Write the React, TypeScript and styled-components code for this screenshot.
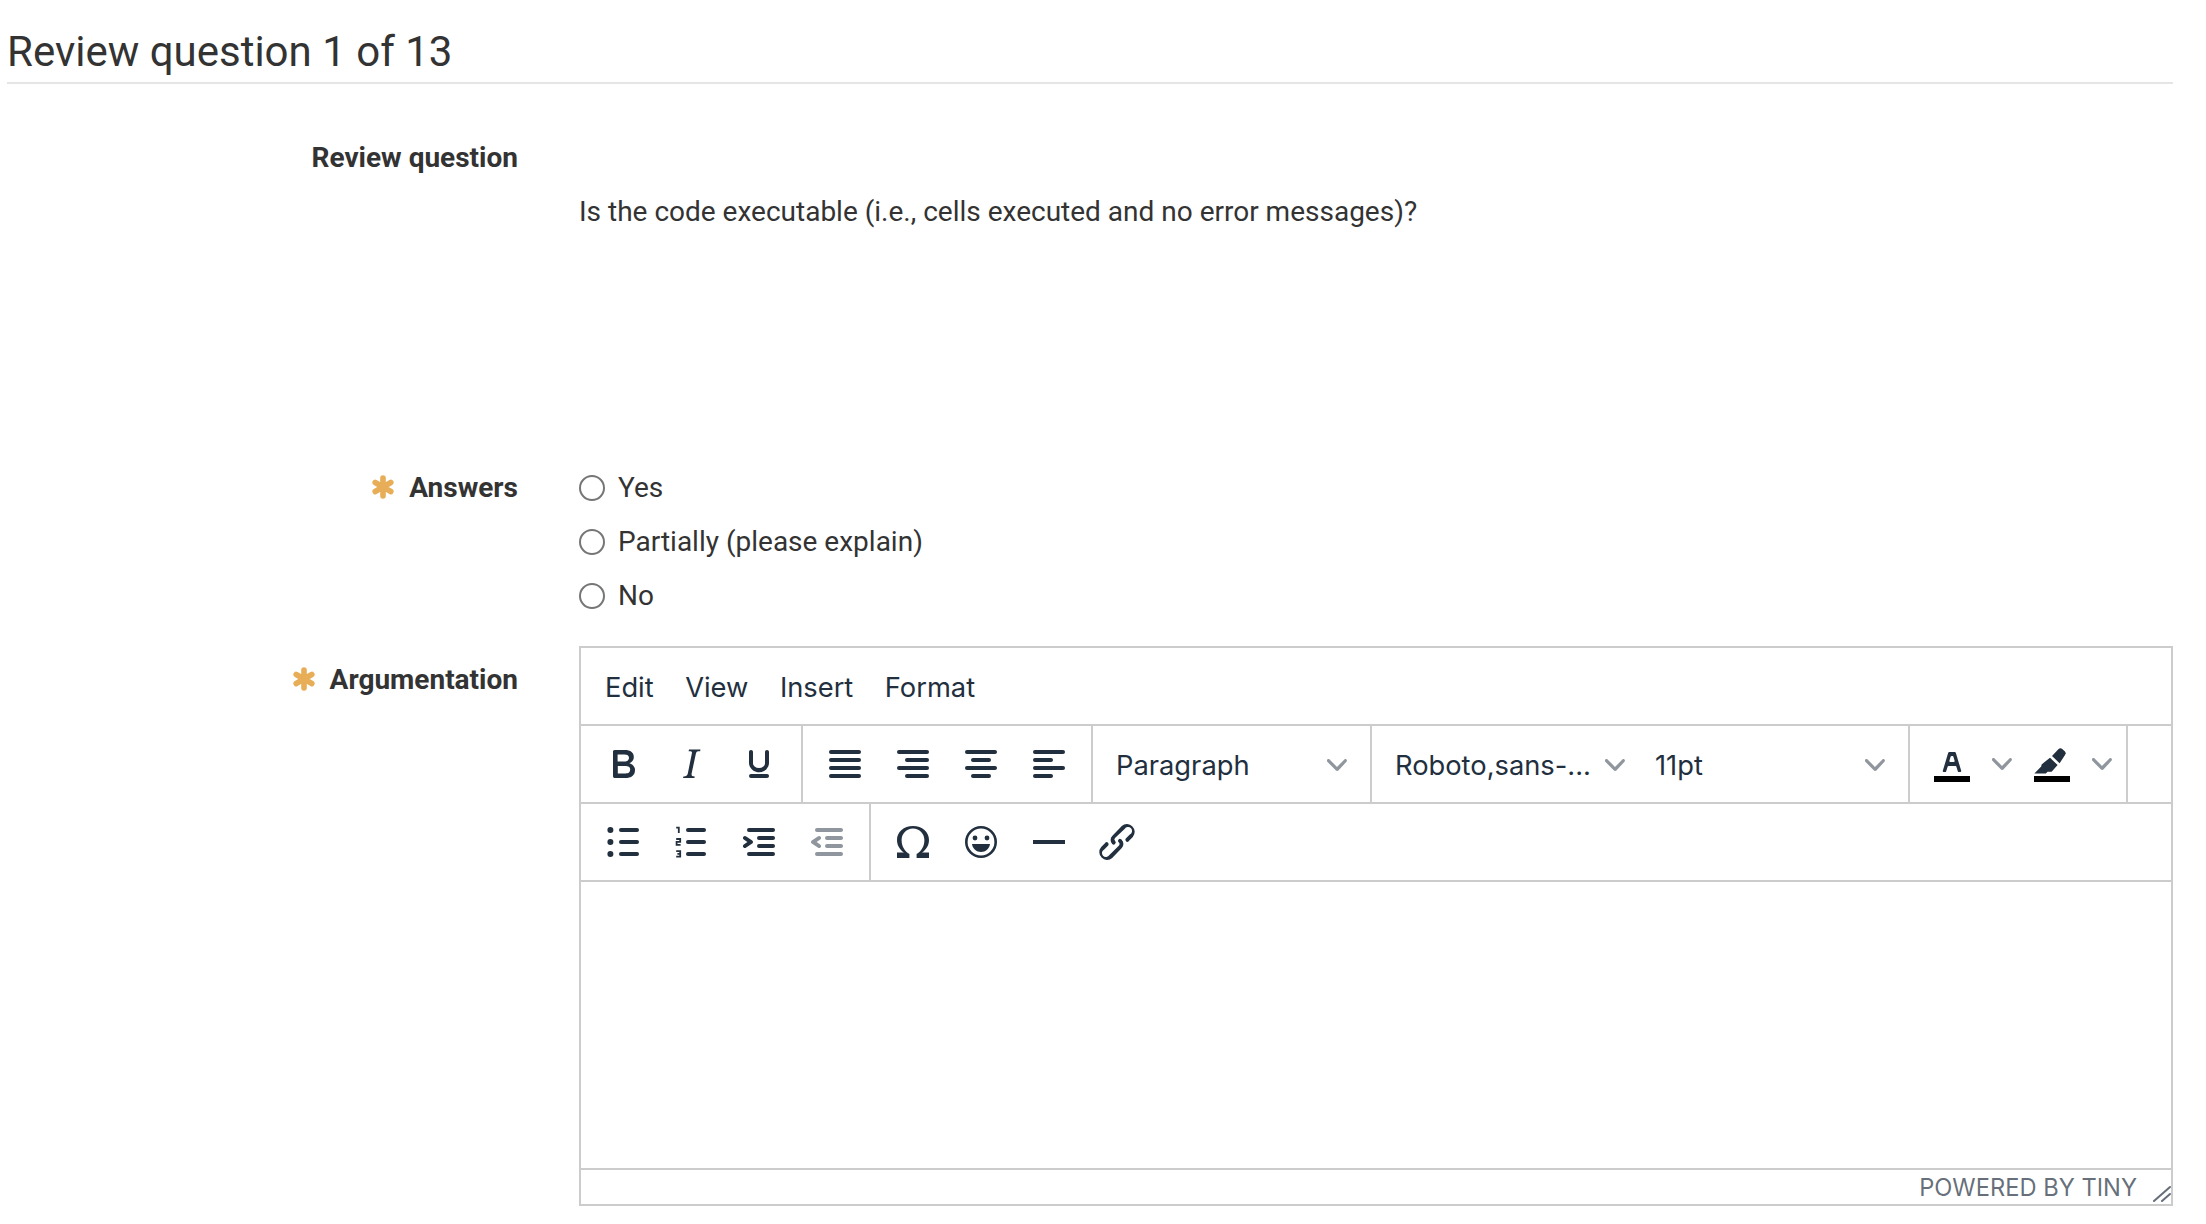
import { ReactNode } from 'react'
import styled, { createGlobalStyle } from 'styled-components'

const GlobalStyle = createGlobalStyle`
  html, body {
    margin: 0;
    padding: 0;
    background: #fff;
  }
  body {
    font-family: Roboto, "Liberation Sans", sans-serif;
    color: #333;
  }
`

const Page = styled.div`
  padding: 0 33px 0 7px;
`

const Heading = styled.h2`
  margin: 0;
  height: 82px;
  border-bottom: 2px solid #e5e5e5;
  font-size: 42px;
  font-weight: 400;
  line-height: 104px;
  color: #333;
`

const FormRow = styled.div<{ $top?: number }>`
  display: grid;
  grid-template-columns: 511px 1fr;
  column-gap: 61px;
  margin-top: ${(p) => p.$top ?? 0}px;
`

const Label = styled.div<{ $top?: number }>`
  display: flex;
  justify-content: flex-end;
  align-items: center;
  gap: 14px;
  height: 40px;
  margin-top: ${(p) => p.$top ?? 0}px;
  font-size: 28px;
  font-weight: 700;
  color: #333;
`

const Star = styled.svg`
  width: 24px;
  height: 24px;
  stroke: #e8ad57;
  stroke-width: 5.6;
  stroke-linecap: round;
  fill: none;
`

const Question = styled.div`
  height: 275px;
  padding-top: 55px;
  font-size: 28px;
  line-height: 40px;
  color: #333;
`

const RadioList = styled.div`
  display: flex;
  flex-direction: column;
  gap: 14px;
`

const RadioRow = styled.label`
  display: flex;
  align-items: center;
  gap: 13px;
  height: 40px;
  font-size: 28px;
  color: #333;
`

const RadioDot = styled.span`
  width: 26px;
  height: 26px;
  margin-top: 2px;
  box-sizing: border-box;
  border: 2px solid #767676;
  border-radius: 50%;
  background: #fff;
`

const Editor = styled.div`
  display: flex;
  flex-direction: column;
  height: 560px;
  box-sizing: border-box;
  border: 2px solid #ccc;
  font-family: Inter, "Noto Sans", sans-serif;
  color: #222f3e;
`

const MenuBar = styled.div`
  display: flex;
  align-items: center;
  gap: 31.5px;
  height: 78px;
  padding: 2px 24px 0;
  box-sizing: border-box;
  border-bottom: 2px solid #ccc;
  font-size: 27.3px;
`

const ToolRow = styled.div`
  display: flex;
  height: 76px;
  border-bottom: 2px solid #ccc;
`

const ToolGroup = styled.div<{ $last?: boolean }>`
  display: flex;
  align-items: center;
  padding: 0 8px;
  border-right: ${(p) => (p.$last ? 'none' : '2px solid #ccc')};
`

const ToolButton = styled.span<{ $off?: boolean }>`
  display: flex;
  align-items: center;
  justify-content: center;
  width: 68px;
  height: 68px;
  svg {
    width: 48px;
    height: 48px;
    fill: #222f3e;
    opacity: ${(p) => (p.$off ? 0.5 : 1)};
  }
`

const SelectBox = styled.span<{ $w: number }>`
  display: flex;
  align-items: center;
  justify-content: space-between;
  box-sizing: border-box;
  width: ${(p) => p.$w}px;
  height: 68px;
  padding: 2px 15px 0 15px;
  font-size: 27.3px;
  white-space: nowrap;
`

const ChevronWrap = styled.span<{ $w?: number }>`
  display: flex;
  align-items: center;
  justify-content: center;
  flex: none;
  width: ${(p) => (p.$w ? `${p.$w}px` : 'auto')};
  svg {
    display: block;
    width: 20px;
    height: 20px;
    fill: #222f3e;
    opacity: 0.5;
  }
`

const EditArea = styled.div`
  flex: 1;
  border-bottom: 2px solid #ccc;
`

const StatusBar = styled.div`
  display: flex;
  align-items: center;
  justify-content: flex-end;
  height: 34px;
  font-size: 23.7px;
  color: rgba(34, 47, 62, 0.7);
`

const ResizeHandle = styled.svg`
  align-self: flex-end;
  width: 20px;
  height: 20px;
  margin-left: 14px;
  stroke: rgba(34, 47, 62, 0.7);
  stroke-width: 2;
  stroke-linecap: round;
  fill: none;
`

const Chevron = () => (
  <svg viewBox="0 0 10 10">
    <path d="M8.7 2.2c.3-.3.8-.3 1 0 .4.4.4.9 0 1.2L5.7 7.8c-.3.3-.9.3-1.2 0L.2 3.4a.8.8 0 010-1.2c.3-.3.8-.3 1.1 0L5 6l3.7-3.8z" />
  </svg>
)

const Asterisk = () => (
  <Star viewBox="0 0 24 24">
    <path d="M12 3v18M4.200 7.500l15.600 9M19.800 7.500l-15.600 9" />
  </Star>
)

const bars = (rows: [number, number][]) =>
  rows.map(([x, w], i) => <rect key={i} x={x} y={5 + i * 4} width={w} height={2} rx={1} />)

const icons: Record<string, ReactNode> = {
  bold: <path d="M7.8 19c-.3 0-.5 0-.6-.2l-.2-.5V5.7c0-.2 0-.4.2-.5l.6-.2h5c1.5 0 2.7.3 3.5 1 .7.6 1.1 1.4 1.1 2.5a3 3 0 01-.6 1.9c-.4.6-1 1-1.6 1.2.4.1.9.3 1.3.6s.8.7 1 1.2c.4.4.5 1 .5 1.6 0 1.3-.4 2.3-1.3 3-.8.7-2.1 1-3.8 1H7.8zm5-8.3c.6 0 1.2-.1 1.6-.5.4-.3.6-.7.6-1.3 0-1.1-.8-1.7-2.3-1.7H9.3v3.5h3.4zm.5 6c.7 0 1.3-.1 1.7-.4.4-.4.6-.9.6-1.5s-.2-1-.7-1.4c-.4-.3-1-.4-2-.4H9.4v3.8h4z" />,
  italic: <path d="M16.7 4.7l-.1.9h-.3c-.6 0-1 0-1.4.3-.3.3-.4.6-.5 1.1l-2.1 9.8v.6c0 .5.4.8 1.4.8h.2l-.2.8H8l.2-.8h.2c1.1 0 1.8-.5 2-1.5l2-9.8.1-.5c0-.6-.4-.8-1.4-.8h-.3l.2-.9h5.8z" />,
  underline: <path d="M16 5c.6 0 1 .4 1 1v5.500a4 4 0 01-.4 1.800l-1 1.400a5.300 5.300 0 01-5.500 1 5 5 0 01-1.600-1c-.5-.4-.8-.9-1.100-1.400a4 4 0 01-.4-1.800V6c0-.6.4-1 1-1s1 .4 1 1v5.500c0 .3 0 .6.2 1l.6.7a3.300 3.300 0 002.200.8 3.400 3.400 0 002.200-.8c.3-.2.5-.4.6-.7.2-.4.2-.7.2-1V6c0-.6.4-1 1-1zM8 17h8c.6 0 1 .4 1 1s-.4 1-1 1H8a1 1 0 010-2z" />,
  justify: bars([[4, 16], [4, 16], [4, 16], [4, 16]]),
  right: bars([[4, 16], [8, 12], [4, 16], [8, 12]]),
  center: bars([[4, 16], [7, 10], [4, 16], [7, 10]]),
  left: bars([[4, 16], [4, 10], [4, 16], [4, 10]]),
  bullets: (
    <>
      <rect x="10" y="5" width="10" height="2" rx="1" />
      <rect x="10" y="11" width="10" height="2" rx="1" />
      <rect x="10" y="17" width="10" height="2" rx="1" />
      <circle cx="5.700" cy="6" r="1.500" />
      <circle cx="5.700" cy="12" r="1.500" />
      <circle cx="5.700" cy="18" r="1.500" />
    </>
  ),
  numbers: (
    <>
      <rect x="9.500" y="5" width="10" height="2" rx="1" />
      <rect x="9.500" y="11" width="10" height="2" rx="1" />
      <rect x="9.500" y="17" width="10" height="2" rx="1" />
      <path
        d="M4.600 4.800h1.300V7.500M4.600 10.500h2v1.400H4.800v1.500h2M4.600 16.600h2v1.300H5.200 6.600v1.400H4.600"
        fill="none"
        stroke="#222f3e"
        strokeWidth=".9"
      />
    </>
  ),
  indent: <path d="M7 5h12c.6 0 1 .4 1 1s-.4 1-1 1H7a1 1 0 110-2zm5 4h7c.6 0 1 .4 1 1s-.4 1-1 1h-7a1 1 0 010-2zm0 4h7c.6 0 1 .4 1 1s-.4 1-1 1h-7a1 1 0 010-2zm-5 4h12a1 1 0 010 2H7a1 1 0 010-2zm-2.600-3.800L6.200 12l-1.800-1.200a1 1 0 011.200-1.600l3 2a1 1 0 010 1.600l-3 2a1 1 0 11-1.200-1.600z" />,
  outdent: <path d="M7 5h12c.6 0 1 .4 1 1s-.4 1-1 1H7a1 1 0 110-2zm5 4h7c.6 0 1 .4 1 1s-.4 1-1 1h-7a1 1 0 010-2zm0 4h7c.6 0 1 .4 1 1s-.4 1-1 1h-7a1 1 0 010-2zm-5 4h12a1 1 0 010 2H7a1 1 0 010-2zm1.600-3.800a1 1 0 11-1.200 1.600l-3-2a1 1 0 010-1.600l3-2a1 1 0 011.200 1.600L6.800 12l1.800 1.200z" />,
  omega: <path d="M4 20v-2.700h3.500C5.300 15.800 4 13.500 4 11c0-4 3.400-7 8-7s8 3 8 7c0 2.500-1.300 4.800-3.500 6.300H20V20h-6.200v-2c2.200-1.200 3.900-3.700 3.900-7 0-3-2.400-5.700-5.700-5.700S6.300 8 6.300 11c0 3.300 1.700 5.800 3.900 7v2z" />,
  emoji: (
    <>
      <path fillRule="evenodd" d="M12 4a8 8 0 110 16 8 8 0 010-16zm0 1.300a6.700 6.700 0 100 13.400 6.700 6.700 0 000-13.400z" />
      <circle cx="9" cy="10" r="1.200" />
      <circle cx="15" cy="10" r="1.200" />
      <path d="M7.500 13h9c-.3 2.300-2.200 4-4.500 4s-4.200-1.700-4.500-4z" />
    </>
  ),
  hr: <path d="M4 11h16v2H4z" />,
  link: <path d="M6.200 12.300a1 1 0 011.400 1.400l-2 2a2 2 0 102.600 2.800l4.800-4.800a1 1 0 000-1.400 1 1 0 111.400-1.300 2.900 2.900 0 010 4L9.600 20a3.900 3.900 0 01-5.500-5.500l2-2zm11.600-.6a1 1 0 01-1.400-1.400l2-2a2 2 0 10-2.600-2.800L11 10a1 1 0 000 1.400A1 1 0 119.600 13a2.900 2.900 0 010-4L14.400 4a3.900 3.900 0 015.500 5.500l-2 2z" />,
  forecolor: (
    <>
      <path d="M3 18h18v3H3z" fill="#000" />
      <path fillRule="evenodd" d="M8.700 16h-.8a.5.5 0 01-.5-.6l2.700-9c.1-.3.3-.4.5-.4h2.800c.2 0 .4.1.5.4l2.700 9a.5.5 0 01-.5.6h-.8a.5.5 0 01-.4-.4l-.7-2.200c0-.3-.3-.4-.5-.4h-3.400c-.2 0-.4.1-.5.4l-.7 2.200c0 .3-.2.4-.4.400zm2.600-7.600l-.6 2a.5.5 0 00.5.6h1.600a.5.5 0 00.5-.6l-.6-2c0-.3-.3-.4-.5-.4h-.4c-.2 0-.4.1-.5.4z" />
    </>
  ),
  hilite: (
    <>
      <path d="M3 18h18v3H3z" fill="#000" />
      <path d="M15.300 4.500a1.300 1.300 0 011.800 0l1.400 1.200a1.300 1.300 0 010 1.800l-2.700 4.100L12 8z" />
      <path d="M11 8.900l3.800 3.600-3 3.400h-2l-.9.8H3.200l3.400-3.400.2-1.100z" />
    </>
  ),
}

const Icon = ({ name, off }: { name: string; off?: boolean }) => (
  <ToolButton $off={off}>
    <svg viewBox="0 0 24 24">{icons[name]}</svg>
  </ToolButton>
)

const Radio = ({ label }: { label: string }) => (
  <RadioRow>
    <RadioDot />
    {label}
  </RadioRow>
)

export default function App() {
  return (
    <Page>
      <GlobalStyle />
      <Heading>Review question 1 of 13</Heading>

      <FormRow $top={53}>
        <Label>Review question</Label>
        <Question>Is the code executable (i.e., cells executed and no error messages)?</Question>
      </FormRow>

      <FormRow>
        <Label>
          <Asterisk />
          Answers
        </Label>
        <RadioList>
          <Radio label="Yes" />
          <Radio label="Partially (please explain)" />
          <Radio label="No" />
        </RadioList>
      </FormRow>

      <FormRow $top={31}>
        <Label $top={13}>
          <Asterisk />
          Argumentation
        </Label>
        <Editor>
          <MenuBar>
            <span>Edit</span>
            <span>View</span>
            <span>Insert</span>
            <span>Format</span>
          </MenuBar>
          <ToolRow>
            <ToolGroup>
              <Icon name="bold" />
              <Icon name="italic" />
              <Icon name="underline" />
            </ToolGroup>
            <ToolGroup>
              <Icon name="justify" />
              <Icon name="right" />
              <Icon name="center" />
              <Icon name="left" />
            </ToolGroup>
            <ToolGroup>
              <SelectBox $w={261}>
                Paragraph
                <ChevronWrap><Chevron /></ChevronWrap>
              </SelectBox>
            </ToolGroup>
            <ToolGroup>
              <SelectBox $w={260}>
                Roboto,sans-...
                <ChevronWrap><Chevron /></ChevronWrap>
              </SelectBox>
              <SelectBox $w={260}>
                11pt
                <ChevronWrap><Chevron /></ChevronWrap>
              </SelectBox>
            </ToolGroup>
            <ToolGroup>
              <Icon name="forecolor" />
              <ChevronWrap $w={32}><Chevron /></ChevronWrap>
              <Icon name="hilite" />
              <ChevronWrap $w={32}><Chevron /></ChevronWrap>
            </ToolGroup>
          </ToolRow>
          <ToolRow>
            <ToolGroup>
              <Icon name="bullets" />
              <Icon name="numbers" />
              <Icon name="indent" />
              <Icon name="outdent" off />
            </ToolGroup>
            <ToolGroup $last>
              <Icon name="omega" />
              <Icon name="emoji" />
              <Icon name="hr" />
              <Icon name="link" />
            </ToolGroup>
          </ToolRow>
          <EditArea />
          <StatusBar>
            POWERED BY TINY
            <ResizeHandle viewBox="0 0 20 20">
              <path d="M19 3L3 17M19 10l-8 7" />
            </ResizeHandle>
          </StatusBar>
        </Editor>
      </FormRow>
    </Page>
  )
}
